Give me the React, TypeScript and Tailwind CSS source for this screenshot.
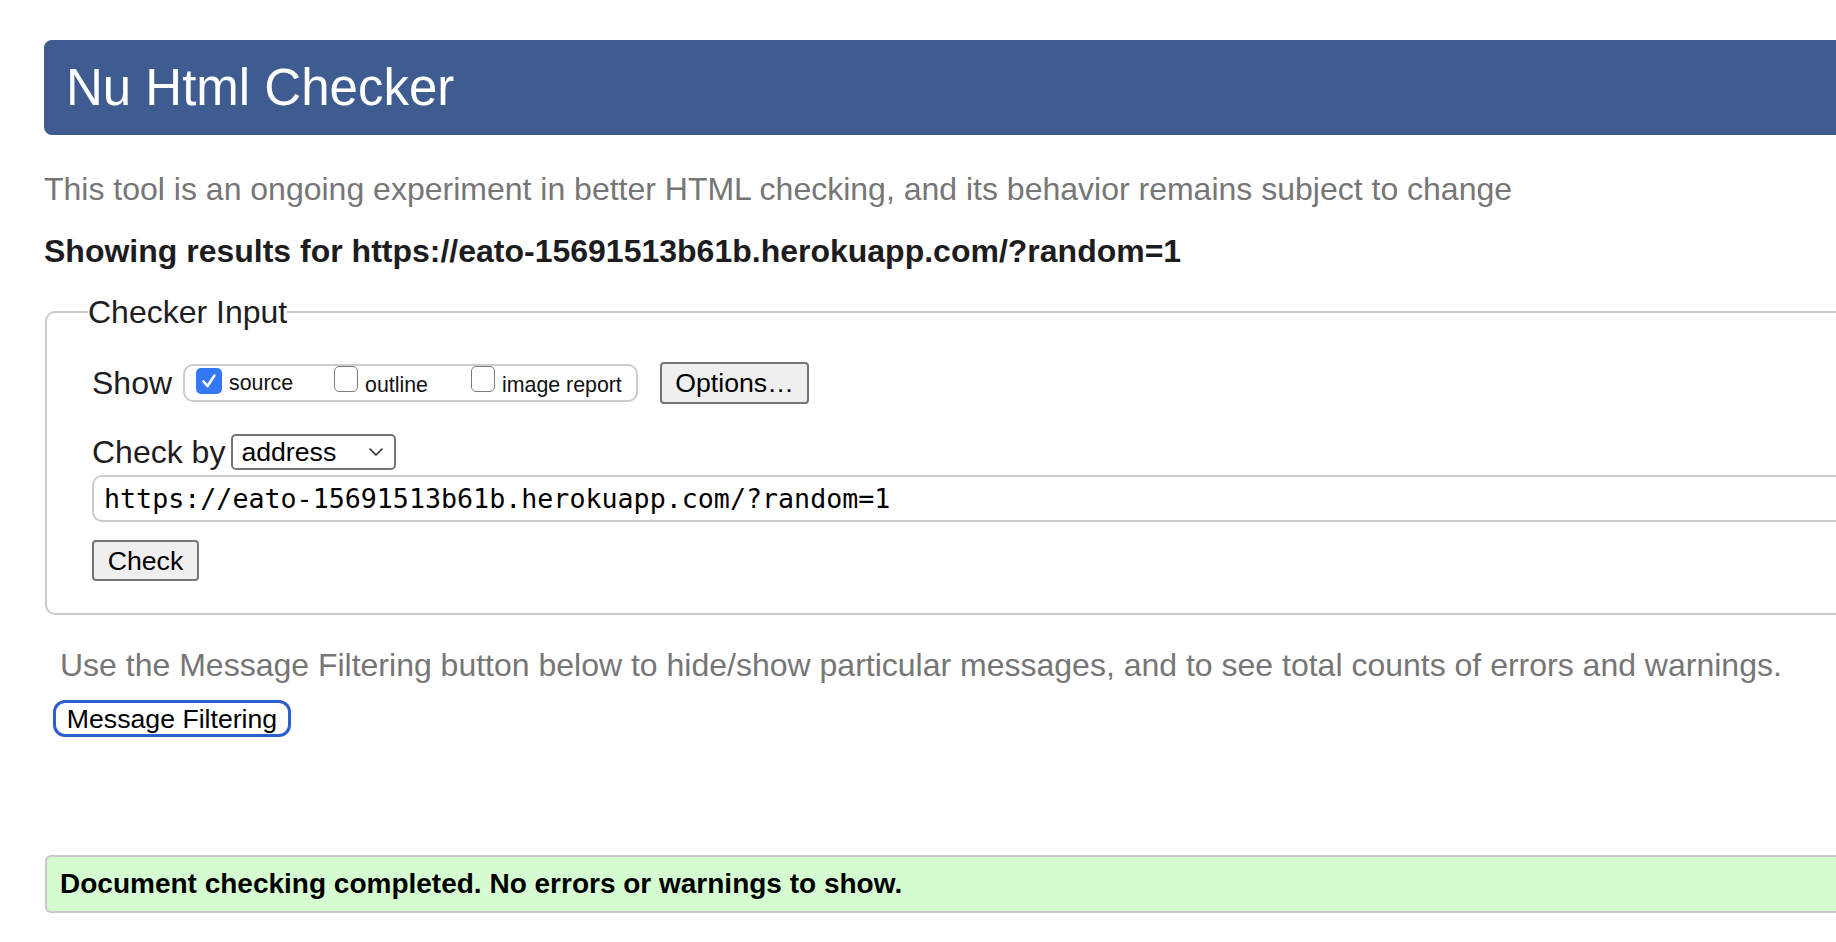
import React from "react";

const sans = { fontFamily: '"Liberation Sans", Arial, Helvetica, sans-serif' };

function Box({ checked }: { checked?: boolean }) {
  if (checked) {
    return (
      <div className="w-[26px] h-[26px] rounded-[5px] bg-[#3478f6] flex items-center justify-center shrink-0">
        <svg width="18" height="18" viewBox="0 0 18 18" fill="none">
          <path d="M3.5 9.5 L7.5 14 L14.5 3.5" stroke="#fff" strokeWidth="2.6" strokeLinecap="round" strokeLinejoin="round" />
        </svg>
      </div>
    );
  }
  return <div className="w-[24px] h-[26px] rounded-[5px] border-[1.5px] border-[#7c7c7c] bg-white shrink-0" />;
}

function Opt({ checked, label, width }: { checked?: boolean; label: string; width: string }) {
  return (
    <div className={`flex items-baseline gap-[7px] ${width}`}>
      <Box checked={checked} />
      <span className="text-[21.33px] leading-[24px] text-[#111]">{label}</span>
    </div>
  );
}

export default function App() {
  return (
    <div className="min-h-screen w-full bg-white overflow-hidden pl-[44px] pb-10" style={sans}>
      <div className="mt-[40px] h-[95px] rounded-l-[8px] bg-[#3e5c8f] flex items-center pl-[22px]">
        <h1 className="text-[51px] leading-[58px] text-white font-normal">Nu Html Checker</h1>
      </div>

      <p className="mt-[36px] text-[32px] leading-[36px] text-[#767676] whitespace-nowrap">
        This tool is an ongoing experiment in better HTML checking, and its behavior remains subject to change
      </p>

      <p className="mt-[26px] text-[32px] leading-[36px] font-bold text-[#1d1d1f] whitespace-nowrap">
        Showing results for https://eato-15691513b61b.herokuapp.com/?random=1
      </p>

      <fieldset className="mt-[25px] ml-[1px] border-2 border-r-0 border-[#cbcbcb] rounded-l-[10px] pl-[45px] pt-[32px] pb-[32px]">
        <legend className="-ml-[4px] text-[32px] leading-[36px] text-[#1d1d1f]">Checker Input</legend>

        <div className="flex items-center h-[42px]">
          <span className="text-[32px] leading-[36px] text-[#1d1d1f]">Show</span>
          <div className="ml-[11px] h-[38px] w-[455px] border-2 border-[#cdcdcd] rounded-[10px] flex items-center pl-[11px] pb-[3px]">
            <Opt checked label="source" width="w-[138px]" />
            <Opt label="outline" width="w-[137px]" />
            <Opt label="image report" width="w-[160px]" />
          </div>
          <div className="ml-[22px] h-[42px] w-[149px] bg-[#efefef] border-2 border-[#767676] rounded-[4px] flex items-center justify-center text-[26.67px] text-black">
            Options…
          </div>
        </div>

        <div className="mt-[30px] flex items-center gap-[6px]">
          <span className="text-[32px] leading-[36px] text-[#1d1d1f]">Check by</span>
          <div className="h-[36px] w-[165px] border-2 border-[#767676] rounded-[5px] flex items-center justify-between pl-[8px] pr-[11px]">
            <span className="text-[26.67px] leading-[30px] text-black">address</span>
            <svg width="14" height="8" viewBox="0 0 14 8" fill="none">
              <path d="M1 1 L7 7 L13 1" stroke="#222" strokeWidth="1.5" strokeLinecap="round" strokeLinejoin="round" />
            </svg>
          </div>
        </div>

        <div className="mt-[5px] h-[47px] border-2 border-r-0 border-[#cbcbcb] rounded-l-[10px] flex items-center pl-[10px]">
          <span
            className="text-[26.67px] leading-[30px] text-black whitespace-nowrap"
            style={{ fontFamily: '"DejaVu Sans Mono", "Liberation Mono", monospace' }}
          >
            https://eato-15691513b61b.herokuapp.com/?random=1
          </span>
        </div>

        <div className="mt-[18px] h-[41px] w-[107px] bg-[#efefef] border-2 border-[#767676] rounded-[4px] flex items-center justify-center text-[26.67px] text-black">
          Check
        </div>
      </fieldset>

      <p className="mt-[32px] ml-[16px] text-[32px] leading-[36px] text-[#767676] whitespace-nowrap">
        Use the Message Filtering button below to hide/show particular messages, and to see total counts of errors and warnings.
      </p>

      <div className="mt-[17px] ml-[9px] h-[37px] w-[238px] border-[3px] border-[#2c5fcc] rounded-[12px] bg-white flex items-center justify-center text-[26.67px] text-black">
        Message Filtering
      </div>

      <div className="mt-[118px] ml-[1px] h-[58px] border-2 border-r-0 border-[#c9c9c9] rounded-l-[6px] bg-[#d6fcd2] flex items-center pl-[13px]">
        <span className="text-[28px] leading-[32px] font-bold text-black whitespace-nowrap">
          Document checking completed. No errors or warnings to show.
        </span>
      </div>
    </div>
  );
}
